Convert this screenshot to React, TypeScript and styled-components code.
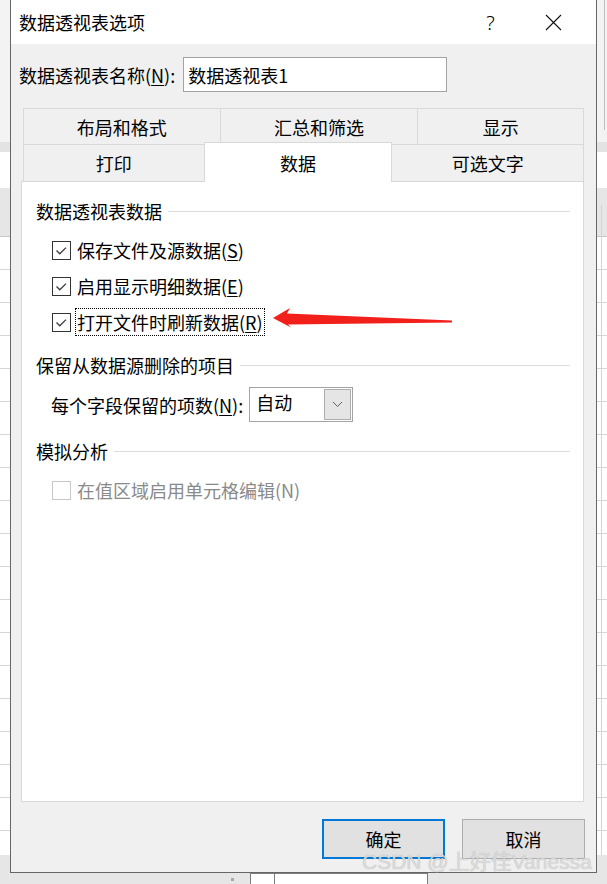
import styled, { createGlobalStyle } from 'styled-components';

const GlobalStyle = createGlobalStyle`
  html, body {
    margin: 0;
    padding: 0;
    background: #fff;
  }
  body {
    font-family: "Noto Sans CJK SC", "Noto Sans", sans-serif;
    color: #000;
  }
`;

const Screen = styled.div`
  position: relative;
  width: 607px;
  height: 884px;
  overflow: hidden;
  display: grid;
  grid-template-columns: 10px 587px 10px;
  grid-template-rows: 873px 11px;
`;

const SheetEdge = styled.div<{ $right?: boolean }>`
  grid-row: 1;
  background:
    ${p => p.$right
      ? 'linear-gradient(to right, transparent 0 7px, #bfbfbf 7px 8px, transparent 8px) 0 0 / 100% 130px no-repeat,' +
        'linear-gradient(to right, transparent 0 4px, #d4d4d4 4px 5px, transparent 5px) 0 205px / 100% 650px no-repeat,'
      : ''}
    linear-gradient(to bottom, #f3f3f3 0 142px, #e3e3e3 142px 152px, #fff 152px 188px, #e6e6e6 188px 236px, #c6c6c6 236px 237px, transparent 237px 855px, #e6e6e6 855px),
    repeating-linear-gradient(to bottom, #d6d6d6 0 1px, #fff 1px 33px) 0 5px;
`;

const Dialog = styled.div`
  grid-column: 2;
  grid-row: 1;
  box-sizing: border-box;
  background: #f0f0f0;
  border: 1px solid #666;
  border-top: none;
  display: flex;
  flex-direction: column;
`;

const TitleBar = styled.div`
  height: 44px;
  background: #fff;
  display: flex;
  align-items: center;
  padding-left: 8px;
  padding-right: 11px;
`;

const Title = styled.div`
  font-size: 18px;
  line-height: 24px;
  flex: 1;
`;

const TitleButton = styled.div`
  width: 63px;
  height: 44px;
  display: flex;
  align-items: center;
  justify-content: center;
  font-family: "Noto Sans", sans-serif;
  font-size: 20px;
  font-weight: 300;
`;

const NameRow = styled.div`
  margin-top: 13px;
  height: 35px;
  display: flex;
  align-items: center;
  padding-left: 8px;
  gap: 8px;
`;

const Label = styled.span<{ $disabled?: boolean }>`
  font-size: 18px;
  line-height: 24px;
  white-space: nowrap;
  color: ${p => (p.$disabled ? '#8a8a8a' : '#000')};
  u {
    text-underline-offset: 2px;
  }
`;

const TextInput = styled.div`
  box-sizing: border-box;
  width: 264px;
  height: 35px;
  background: #fff;
  border: 1px solid #a3a3a3;
  padding-left: 4px;
  display: flex;
  align-items: center;
  font-size: 18px;
`;

const TabArea = styled.div`
  margin-top: 16px;
  padding: 0 11px 0 11px;
`;

const TabRow = styled.div<{ $front?: boolean }>`
  display: flex;
  margin: 0 1px;
  position: relative;
  z-index: ${p => (p.$front ? 1 : 0)};
`;

const Tab = styled.div<{ $width: number; $active?: boolean; $height: number }>`
  box-sizing: border-box;
  width: ${p => p.$width}px;
  height: ${p => p.$height}px;
  margin-left: -1px;
  &:first-child {
    margin-left: 0;
  }
  display: flex;
  align-items: center;
  justify-content: center;
  font-size: 18px;
  border: 1px solid #d9d9d9;
  border-bottom: none;
  background: ${p => (p.$active ? '#fff' : '#f0f0f0')};
  ${p => p.$active && 'margin-top: -2px; height: ' + (p.$height + 3) + 'px; margin-bottom: -1px; position: relative; z-index: 2;'}
`;

const Panel = styled.div`
  flex: 1;
  margin: 0 12px 0 10px;
  background: #fff;
  border: 1px solid #d9d9d9;
  padding: 17px 13px 0 14px;
  display: flex;
  flex-direction: column;
`;

const SectionHead = styled.div<{ $gap: number }>`
  margin-top: ${p => p.$gap}px;
  display: flex;
  align-items: center;
  gap: 6px;
  font-size: 18px;
  line-height: 24px;
  &::after {
    content: '';
    flex: 1;
    height: 1px;
    background: #dcdcdc;
  }
`;

const CheckRow = styled.div<{ $gap?: number }>`
  margin-top: ${p => p.$gap ?? 0}px;
  height: 36px;
  display: flex;
  align-items: center;
  padding-left: 16px;
  gap: 4px;
`;

const Box = styled.div<{ $disabled?: boolean }>`
  box-sizing: border-box;
  width: 19px;
  height: 19px;
  border: 1px solid ${p => (p.$disabled ? '#c8c8c8' : '#333')};
  background: #fff;
  display: flex;
  align-items: center;
  justify-content: center;
`;

const FocusLabel = styled(Label)<{ $focus?: boolean }>`
  padding: 1px;
  border: 1px ${p => (p.$focus ? 'dotted #000' : 'solid transparent')};
`;

const ComboRow = styled.div`
  margin-top: 10px;
  height: 35px;
  display: flex;
  align-items: center;
  padding-left: 15px;
  gap: 6px;
`;

const Combo = styled.div`
  box-sizing: border-box;
  width: 104px;
  height: 35px;
  border: 1px solid #a3a3a3;
  background: #fff;
  display: flex;
  align-items: center;
  padding: 1px;
  font-size: 18px;
`;

const ComboText = styled.span`
  flex: 1;
  padding-left: 5px;
  margin-top: -5px;
`;

const ComboButton = styled.div`
  box-sizing: border-box;
  width: 27px;
  height: 100%;
  background: #e5e5e5;
  border: 1px solid #adadad;
  display: flex;
  align-items: center;
  justify-content: center;
`;

const Footer = styled.div`
  display: flex;
  justify-content: flex-end;
  gap: 17px;
  padding: 17px 11px 13px;
`;

const Button = styled.div<{ $default?: boolean }>`
  box-sizing: border-box;
  width: 123px;
  height: 40px;
  background: #e1e1e1;
  border: ${p => (p.$default ? '2px solid #0078d7' : '1px solid #adadad')};
  display: flex;
  align-items: center;
  justify-content: center;
  font-size: 18px;
`;

const StatusStrip = styled.div`
  grid-column: 1 / -1;
  grid-row: 2;
  background: #e6e6e6;
  display: flex;
  align-items: flex-start;
  padding-left: 231px;
`;

const Dot = styled.div`
  width: 3px;
  height: 3px;
  background: #a8a8a8;
  margin-top: 5px;
  margin-right: 17px;
`;

const SheetBox = styled.div<{ $width: number }>`
  box-sizing: border-box;
  width: ${p => p.$width}px;
  height: 12px;
  margin-left: -1px;
  background: #fff;
  border: 1px solid #7d7d7d;
  border-bottom: none;
`;

const Watermark = styled.div`
  position: absolute;
  left: 362px;
  top: 849px;
  font-family: "Liberation Sans", "Noto Sans CJK SC", sans-serif;
  font-size: 21px;
  line-height: 26px;
  color: rgba(222, 222, 222, 0.92);
  text-shadow: 0 0 1px rgba(90, 90, 90, 0.4);
  white-space: nowrap;
  pointer-events: none;
`;

const Arrow = styled.svg`
  position: absolute;
  left: 270px;
  top: 305px;
`;

function Check() {
  return (
    <svg width="17" height="17" viewBox="0 0 17 17">
      <polyline points="3.5,8.5 6.8,11.8 13,5.6" fill="none" stroke="#3c3c3c" strokeWidth="1.3" />
    </svg>
  );
}

export default function App() {
  return (
    <>
      <GlobalStyle />
      <Screen>
        <SheetEdge />
        <Dialog>
          <TitleBar>
            <Title>数据透视表选项</Title>
            <TitleButton>?</TitleButton>
            <TitleButton>
              <svg width="17" height="17" viewBox="0 0 17 17">
                <path d="M1 1 L16 16 M16 1 L1 16" stroke="#111" strokeWidth="1.1" />
              </svg>
            </TitleButton>
          </TitleBar>

          <NameRow>
            <Label>数据透视表名称(<u>N</u>):</Label>
            <TextInput>数据透视表1</TextInput>
          </NameRow>

          <TabArea>
            <TabRow>
              <Tab $width={198} $height={36}>布局和格式</Tab>
              <Tab $width={199} $height={36}>汇总和筛选</Tab>
              <Tab $width={167} $height={36}>显示</Tab>
            </TabRow>
            <TabRow $front>
              <Tab $width={182} $height={37}>打印</Tab>
              <Tab $width={189} $height={37} $active>数据</Tab>
              <Tab $width={193} $height={37}>可选文字</Tab>
            </TabRow>
          </TabArea>

          <Panel>
            <SectionHead $gap={0}>数据透视表数据</SectionHead>
            <CheckRow $gap={9}>
              <Box><Check /></Box>
              <FocusLabel>保存文件及源数据(<u>S</u>)</FocusLabel>
            </CheckRow>
            <CheckRow>
              <Box><Check /></Box>
              <FocusLabel>启用显示明细数据(<u>E</u>)</FocusLabel>
            </CheckRow>
            <CheckRow>
              <Box><Check /></Box>
              <FocusLabel $focus>打开文件时刷新数据(<u>R</u>)</FocusLabel>
            </CheckRow>

            <SectionHead $gap={13}>保留从数据源删除的项目</SectionHead>
            <ComboRow>
              <Label>每个字段保留的项数(<u>N</u>):</Label>
              <Combo>
                <ComboText>自动</ComboText>
                <ComboButton>
                  <svg width="11" height="7" viewBox="0 0 11 7">
                    <polyline points="1,1 5.5,5.5 10,1" fill="none" stroke="#606060" strokeWidth="1" />
                  </svg>
                </ComboButton>
              </Combo>
            </ComboRow>

            <SectionHead $gap={17}>模拟分析</SectionHead>
            <CheckRow $gap={9}>
              <Box $disabled />
              <FocusLabel $disabled>在值区域启用单元格编辑(N)</FocusLabel>
            </CheckRow>
          </Panel>

          <Footer>
            <Button $default>确定</Button>
            <Button>取消</Button>
          </Footer>
        </Dialog>
        <SheetEdge $right />

        <StatusStrip>
          <Dot />
          <SheetBox $width={25} />
          <SheetBox $width={154} />
        </StatusStrip>

        <Arrow width="186" height="26" viewBox="0 0 186 26">
          <polygon
            points="3,13 20,3 17,8.5 182,15.5 182,17.5 18,19.5 21,22.5"
            fill="#f2201a"
          />
        </Arrow>

        <Watermark>CSDN @上好佳Vanessa</Watermark>
      </Screen>
    </>
  );
}
